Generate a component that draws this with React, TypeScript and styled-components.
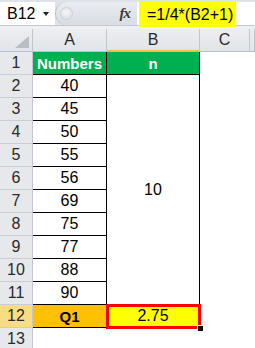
import React from "react";
import styled, { createGlobalStyle } from "styled-components";

const GlobalStyle = createGlobalStyle`
  html, body { margin: 0; padding: 0; background: #fff; }
  body { font-family: "Liberation Sans", Arial, sans-serif; color: #000; }
`;

const numbers = [40, 45, 50, 55, 56, 69, 75, 77, 88, 90];

const Window = styled.div`
  width: 255px;
  height: 348px;
  overflow: hidden;
  background: #fff;
`;

const FormulaBar = styled.div`
  display: flex;
  height: 25px;
  box-sizing: border-box;
  padding-top: 2px;
  background: #dfe3e8;
`;

const NameBox = styled.div`
  width: 55px;
  display: flex;
  align-items: center;
  justify-content: space-between;
  padding: 0 6px 0 7px;
  box-sizing: border-box;
  background: #fff;
  font-size: 16px;
`;

const Caret = styled.span`
  width: 0;
  height: 0;
  border-left: 3.5px solid transparent;
  border-right: 3.5px solid transparent;
  border-top: 4px solid #222;
  margin-top: 1px;
`;

const Tools = styled.div`
  width: 82px;
  display: flex;
  align-items: center;
  justify-content: space-between;
  padding: 0 4px 0 4px;
  box-sizing: border-box;
  background: linear-gradient(#e9ecf0, #d9dde3);
  border-radius: 12px 0 0 12px;
  border-left: 1px solid #b9bfc7;
`;

const Knob = styled.span`
  width: 13px;
  height: 13px;
  border-radius: 50%;
  background: radial-gradient(circle at 45% 40%, #f6f7f9 0%, #dfe2e6 60%, #c9cdd3 100%);
  box-shadow: inset 0 0 0 1px #cdd1d7;
`;

const Fx = styled.span`
  font-family: "Liberation Serif", "Times New Roman", serif;
  font-style: italic;
  font-weight: bold;
  font-size: 15px;
  color: #3a3a3a;
  margin-right: 3px;
  letter-spacing: -1px;
`;

const FormulaInput = styled.div`
  flex: 1;
  display: flex;
  align-items: stretch;
  background: #fff;
  padding-left: 2px;
`;

const Highlight = styled.span`
  display: flex;
  align-items: center;
  background: #ffff00;
  padding: 0 3px 0 8px;
  margin-bottom: -2px;
  font-size: 16px;
`;

const Divider = styled.div`
  height: 4px;
  background: #eef0f3;
  border-top: 1px solid #c3c8cf;
  box-sizing: border-box;
`;

const HeaderRow = styled.div`
  display: grid;
  grid-template-columns: 33px 74px 93px 50px 1fr;
  height: 23px;
`;

const ColHead = styled.div<{ $active?: boolean }>`
  display: flex;
  align-items: center;
  justify-content: center;
  box-sizing: border-box;
  background: linear-gradient(#eceef1, #e1e4e8);
  border-right: 1px solid #c2c7cf;
  border-bottom: ${(p) => (p.$active ? "2px solid #f4be4a" : "1px solid #b9bfc8")};
  font-size: 16px;
  color: #2a2a2a;
`;

const Corner = styled(ColHead)`
  justify-content: flex-end;
  align-items: flex-end;
  padding: 0 3px 3px 0;
`;

const Triangle = styled.span`
  width: 0;
  height: 0;
  border-left: 14px solid transparent;
  border-bottom: 12px solid #b9bec5;
`;

const Sheet = styled.div`
  display: grid;
  grid-template-columns: 33px 74px 93px 50px 1fr;
  grid-auto-rows: 23px;
`;

const RowHead = styled.div<{ $active?: boolean }>`
  display: flex;
  align-items: center;
  justify-content: center;
  box-sizing: border-box;
  background: ${(p) => (p.$active ? "#fcdc83" : "#e6e8ec")};
  border-right: 1px solid #c2c7cf;
  border-bottom: 1px solid #c9cdd4;
  font-size: 16px;
  color: #2a2a2a;
`;

const Cell = styled.div<{ $bg?: string; $bold?: boolean; $color?: string; $rows?: number }>`
  display: flex;
  align-items: center;
  justify-content: center;
  box-sizing: border-box;
  grid-row: span ${(p) => p.$rows ?? 1};
  background: ${(p) => p.$bg ?? "#fff"};
  color: ${(p) => p.$color ?? "#000"};
  font-weight: ${(p) => (p.$bold ? "bold" : "normal")};
  font-size: ${(p) => (p.$bold ? "15px" : "16px")};
  border-right: 1px solid #000;
  border-bottom: 1px solid #000;
`;

const Selected = styled(Cell)`
  position: relative;
  &::after {
    content: "";
    position: absolute;
    top: -1px;
    left: -1px;
    right: -2px;
    bottom: -2px;
    border: 3px solid #ff0000;
  }
`;

const Handle = styled.span`
  position: absolute;
  right: -4px;
  bottom: -4px;
  width: 5px;
  height: 5px;
  background: #000;
  z-index: 2;
  box-shadow: 0 0 0 1px #fff;
`;

const Blank = styled.div``;

export default function App() {
  return (
    <Window>
      <GlobalStyle />
      <FormulaBar>
        <NameBox>
          B12
          <Caret />
        </NameBox>
        <Tools>
          <Knob />
          <Fx>fx</Fx>
        </Tools>
        <FormulaInput>
          <Highlight>=1/4*(B2+1)</Highlight>
        </FormulaInput>
      </FormulaBar>
      <Divider />
      <HeaderRow>
        <Corner>
          <Triangle />
        </Corner>
        <ColHead>A</ColHead>
        <ColHead $active>B</ColHead>
        <ColHead>C</ColHead>
        <ColHead />
      </HeaderRow>
      <Sheet>
        <RowHead>1</RowHead>
        <Cell $bg="#00b050" $color="#fff" $bold>
          Numbers
        </Cell>
        <Cell $bg="#00b050" $color="#fff" $bold>
          n
        </Cell>
        <Blank />
        <Blank />
        {numbers.map((n, i) => (
          <React.Fragment key={n}>
            <RowHead>{i + 2}</RowHead>
            <Cell>{n}</Cell>
            {i === 0 && <Cell $rows={10}>10</Cell>}
            <Blank />
            <Blank />
          </React.Fragment>
        ))}
        <RowHead $active>12</RowHead>
        <Cell $bg="#ffc000" $bold>
          Q1
        </Cell>
        <Selected $bg="#ffff00">
          2.75
          <Handle />
        </Selected>
        <Blank />
        <Blank />
        <RowHead>13</RowHead>
      </Sheet>
    </Window>
  );
}
